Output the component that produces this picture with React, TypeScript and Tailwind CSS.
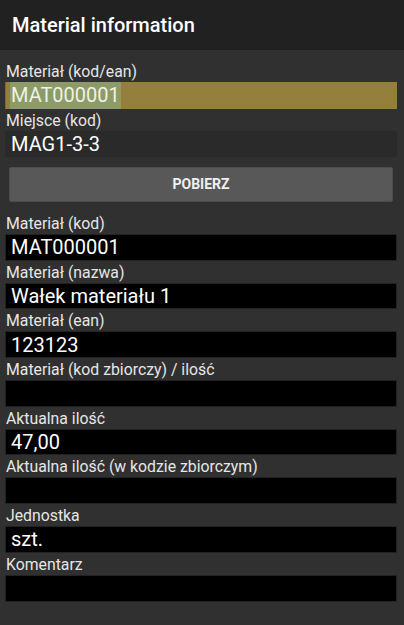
import React from "react";

type Field = { label: string; value?: string };

const fields: Field[] = [
  { label: "Materiał (kod)", value: "MAT000001" },
  { label: "Materiał (nazwa)", value: "Wałek materiału 1" },
  { label: "Materiał (ean)", value: "123123" },
  { label: "Materiał (kod zbiorczy) / ilość" },
  { label: "Aktualna ilość", value: "47,00" },
  { label: "Aktualna ilość (w kodzie zbiorczym)" },
  { label: "Jednostka", value: "szt." },
  { label: "Komentarz" },
];

const Label = ({ children }: { children: React.ReactNode }) => (
  <div className="h-[22px] pl-[1px] pt-[1px] text-[15.8px] leading-[21px] text-[#e6e6e6]">
    {children}
  </div>
);

const App = () => {
  return (
    <div
      className="w-[404px] h-[625px] overflow-hidden bg-[#303030] text-white"
      style={{ fontFamily: "Roboto, 'Noto Sans', sans-serif" }}
    >
      <div className="h-[50px] bg-[#212121] flex items-center pl-[12px]">
        <h1 className="text-[20px] font-medium">Material information</h1>
      </div>

      <div className="pt-[10px] pl-[5px] pr-[7px]">
        <Label>Materiał (kod/ean)</Label>
        <div className="h-[27px] bg-[#957f3d] flex items-center border-l-[1px] border-[#7a6830]">
          <span className="ml-[4px] bg-[#8d9b68] px-[1px] text-[20px] leading-[27px] text-[#eef2e4]">
            MAT000001
          </span>
        </div>

        <Label>Miejsce (kod)</Label>
        <div className="h-[26px] bg-[#2a2a2a] flex items-center pl-[6px] text-[20px]">
          MAG1-3-3
        </div>

        <div className="mt-[10px] mb-[10px] mx-[4px] h-[35px] bg-[#585858] border border-[#4c4c4c] rounded-[2px] flex items-center justify-center text-[14px] font-bold text-[#f0f0f0]">
          POBIERZ
        </div>

        {fields.map((f) => (
          <div key={f.label}>
            <Label>{f.label}</Label>
            <div className="h-[26.7px] bg-black border border-[#222222] flex items-center pl-[5px] text-[20px] text-white">
              {f.value}
            </div>
          </div>
        ))}
      </div>
    </div>
  );
};

export default App;
